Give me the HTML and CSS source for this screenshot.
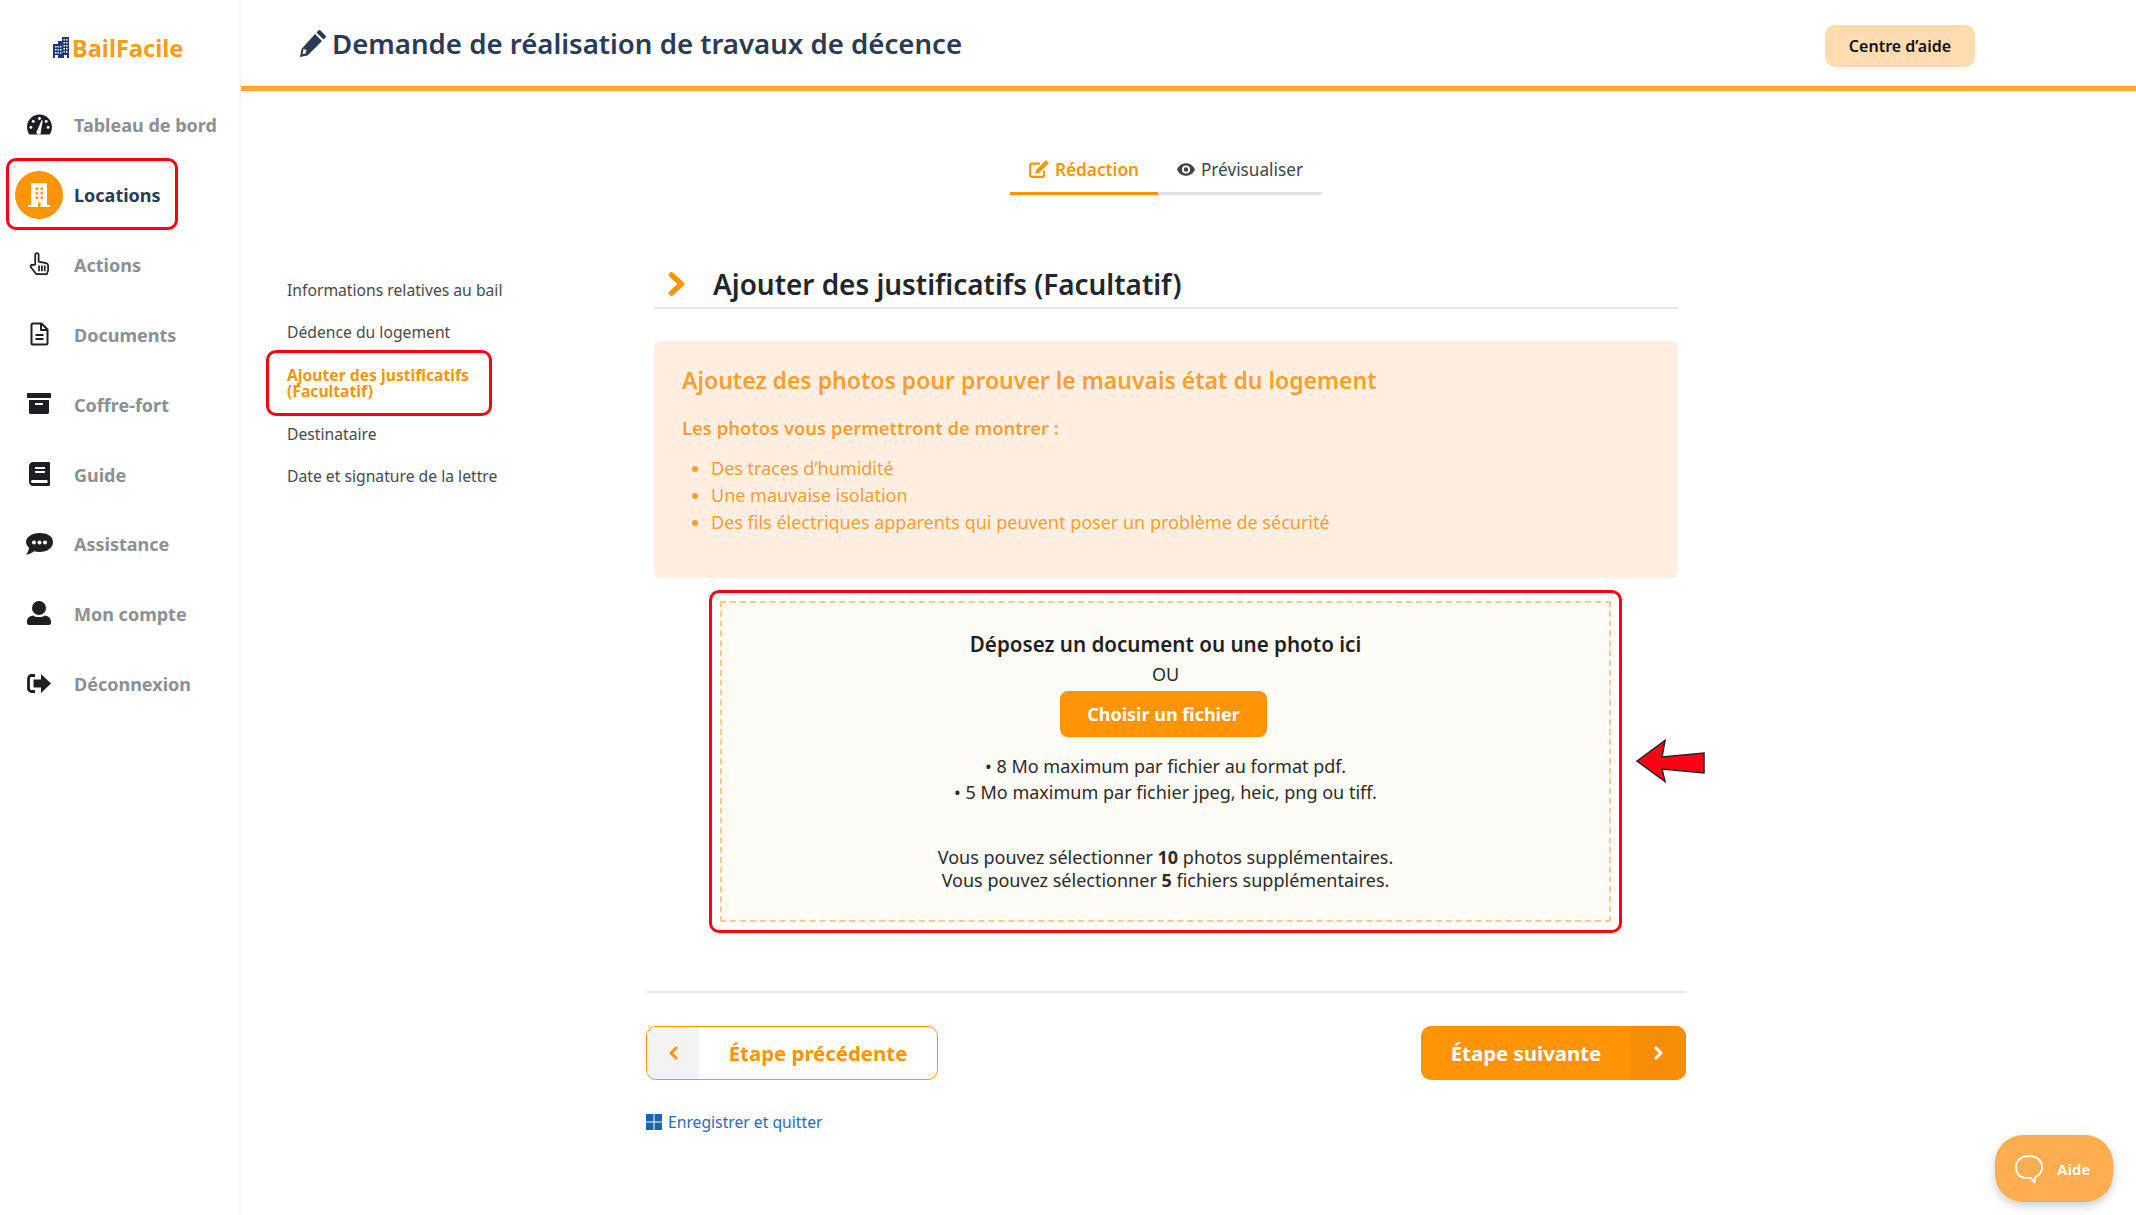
FILE: index.html
```html
<!DOCTYPE html>
<html lang="fr">
<head>
  <meta charset="UTF-8">
  <meta name="viewport" content="width=device-width, initial-scale=1.0">
  <title>BailFacile</title>
  <link rel="stylesheet" href="styles.css">
</head>
<body>
  <div id="wrapper">
    <aside id="sidebar">
      <div class="logo">
        <svg class="logo-icon" viewBox="0 0 16 21" width="16" height="21">
          <path fill="#1f3a78" d="M9 0h7v21H0V7h5V4h4z"/>
          <path fill="#fff" d="M10.5 2h1.5v1.5h-1.5zM13 2h1.5v1.5H13zM10.5 5h1.5v1.5h-1.5zM13 5h1.5v1.500H13zM10.500 8h1.500v1.500h-1.500zM13 8h1.500v1.500H13zM2 9h1.500v1.500H2zM4.500 9H6v1.500H4.500zM7 9h1.500v1.500H7zM2 12h1.500v1.500H2zM4.500 12H6v1.500H4.500zM7 12h1.500v1.500H7zM10.500 11h1.500v1.500h-1.500zM13 11h1.500v1.500H13zM2 15h1.500v1.500H2zM4.500 15H6v1.500H4.500zM7 15h1.500v1.500H7zM10.500 14h1.500v1.500h-1.500zM13 14h1.500v1.500H13zM2 18h3v3H2zM11 18h3v3h-3z"/>
        </svg>
        <span>BailFacile</span>
      </div>
      <nav class="nav">
        <a class="nav-item">
          <span class="nav-icon">
            <svg viewBox="0 0 28 24" width="27" height="23">
              <path fill="#1d1f22" d="M14 1.500C6.800 1.500 1 7.300 1 14.500c0 2.700.8 5.200 2.100 7.300.3.500.8.700 1.300.7h19.200c.5 0 1-.2 1.300-.7 1.300-2.100 2.100-4.600 2.100-7.300 0-7.200-5.800-13-13-13z"/>
              <g fill="#fff">
                <circle cx="5" cy="15" r="1.500"/><circle cx="7.500" cy="8.800" r="1.500"/><circle cx="14" cy="5.800" r="1.500"/><circle cx="21" cy="8.800" r="1.500"/><circle cx="23" cy="15" r="1.500"/>
                <path d="M16.200 7.500l1.200.4-2 11.200a2.400 2.400 0 1 1-3.800-.9z"/>
              </g>
            </svg>
          </span>
          <span>Tableau de bord</span>
        </a>
        <a class="nav-item active">
          <span class="nav-circle">
            <svg viewBox="0 0 22 24" width="22" height="24">
              <path fill="#fff" d="M3 0h16v22h3v2H0v-2h3z"/>
              <path fill="#ff9505" d="M7.500 4.500h2.500v2.500H7.500zM12.500 4.500H15v2.500h-2.500zM7.500 9h2.500v2.500H7.500zM12.500 9H15v2.500h-2.500zM7.500 13.500h2.500v2.500H7.500zM12.500 13.500H15v2.500h-2.500zM10 19.500h2.500v4.500H10z"/>
            </svg>
          </span>
          <span>Locations</span>
        </a>
        <a class="nav-item">
          <span class="nav-icon nudge-up">
            <svg viewBox="0 0 22 25" width="21" height="24" fill="none" stroke="#1d1f22" stroke-width="1.800" stroke-linejoin="round">
              <path d="M6.500 13V3a1.800 1.800 0 0 1 3.600 0v7l7.600 1.500c1.400.3 2.300 1.400 2.300 2.800v4.400c0 .6-.1 1.100-.3 1.600l-1 2.700H7.500L2 15.900c-1-1.300.6-3.300 2-2.300z"/>
              <path d="M10.500 14v6M13.500 14v6M16.500 14v6"/>
            </svg>
          </span>
          <span>Actions</span>
        </a>
        <a class="nav-item">
          <span class="nav-icon nudge-up">
            <svg viewBox="0 0 19 24" width="19" height="24" fill="none" stroke="#1d1f22" stroke-width="2" stroke-linejoin="round">
              <path d="M1.500 3c0-.8.700-1.500 1.500-1.500h8.500l6 6V21c0 .8-.7 1.500-1.500 1.500H3c-.8 0-1.500-.7-1.500-1.500z"/>
              <path d="M11 2v6h6M5.500 13h8M5.500 17h8"/>
            </svg>
          </span>
          <span>Documents</span>
        </a>
        <a class="nav-item">
          <span class="nav-icon nudge-up">
            <svg viewBox="0 0 24 21" width="24" height="21">
              <path fill="#1d1f22" d="M0 1c0-.6.400-1 1-1h22c.6 0 1 .4 1 1v4H0zM2 7h20v12.500c0 .8-.7 1.500-1.500 1.500h-17c-.8 0-1.500-.7-1.500-1.500zm6.500 3c-.4 0-.5.300-.5.500v1c0 .3.100.5.500.5h7c.4 0 .5-.2.500-.5v-1c0-.2-.1-.5-.5-.5z" fill-rule="evenodd"/>
            </svg>
          </span>
          <span>Coffre-fort</span>
        </a>
        <a class="nav-item">
          <span class="nav-icon nudge-up">
            <svg viewBox="0 0 21 24" width="21" height="24">
              <path fill="#1d1f22" d="M4 0h15.500c.8 0 1.500.7 1.500 1.500v21c0 .8-.7 1.500-1.500 1.500H4c-2.200 0-4-1.800-4-4V4c0-2.200 1.800-4 4-4z"/>
              <path fill="#fff" d="M6 5h10v2H6zM6 9h10v2H6zM3.500 18h15v3h-15c-.8 0-1.500-.7-1.500-1.500S2.700 18 3.500 18z"/>
            </svg>
          </span>
          <span>Guide</span>
        </a>
        <a class="nav-item">
          <span class="nav-icon">
            <svg viewBox="0 0 27 22" width="27" height="22">
              <path fill="#1d1f22" d="M13.500 0C6 0 0 4 0 9c0 2.200 1.200 4.200 3.100 5.700-.3 2.500-1.500 5-3.100 7 2.900-.2 6.100-1.800 8-3.500 1.700.5 3.600.8 5.500.8 7.500 0 13.500-4 13.500-10S21 0 13.500 0z"/>
              <circle fill="#fff" cx="8" cy="9.500" r="2"/><circle fill="#fff" cx="13.500" cy="9.500" r="2"/><circle fill="#fff" cx="19" cy="9.500" r="2"/>
            </svg>
          </span>
          <span>Assistance</span>
        </a>
        <a class="nav-item">
          <span class="nav-icon nudge-up">
            <svg viewBox="0 0 24 24" width="24" height="24">
              <circle fill="#1d1f22" cx="12" cy="7" r="7"/>
              <path fill="#1d1f22" d="M6 14.500c1.600 1 3.700 1.500 6 1.500s4.400-.5 6-1.500c3.500.5 6 3 6 6V22c0 1.100-.9 2-2 2H2c-1.100 0-2-.9-2-2v-1.500c0-3.500 2.500-5.500 6-6z"/>
            </svg>
          </span>
          <span>Mon compte</span>
        </a>
        <a class="nav-item">
          <span class="nav-icon nudge-up">
            <svg viewBox="0 0 24 19" width="24" height="19">
              <path fill="none" stroke="#1d1f22" stroke-width="2.800" d="M8 1.500H4.500a3 3 0 0 0-3 3v10a3 3 0 0 0 3 3H8"/>
              <path fill="#1d1f22" d="M14 0l10 9.500L14 19v-5.500H6.500v-8H14z"/>
            </svg>
          </span>
          <span>Déconnexion</span>
        </a>
      </nav>
    </aside>

    <div id="main">
      <header class="topbar">
        <h1 class="page-title">
          <svg viewBox="0 0 28 28" width="28" height="28">
            <path fill="#2b3a55" d="M21.500 1.500l5 5c.6.6.6 1.400 0 2l-2 2-7-7 2-2c.6-.6 1.400-.6 2 0zM16 5l7 7-14.500 14.500L1 28l1.500-8zM4.500 20l-1 5 1.500 0 1.500-.5 1-3.500z"/>
          </svg>
          Demande de réalisation de travaux de décence
        </h1>
        <a class="help-center">Centre d’aide</a>
      </header>

      <div class="content">
        <ul class="steps">
          <li>Informations relatives au bail</li>
          <li>Dédence du logement</li>
          <li class="current">Ajouter des justificatifs (Facultatif)</li>
          <li>Destinataire</li>
          <li>Date et signature de la lettre</li>
        </ul>

        <div class="form-col">
          <div class="tabs">
            <a class="tab active">
              <svg viewBox="0 0 20 18" width="20" height="18">
                <path fill="none" stroke="#ff9505" stroke-width="2.200" d="M15 10.500V15c0 1-.7 1.800-1.800 1.800H3c-1 0-1.800-.8-1.800-1.800V5.500c0-1 .8-1.800 1.800-1.800h8"/>
                <path fill="#ff9505" d="M17 0l3 3L10 13l-4 1 1-4z"/>
              </svg>
              Rédaction
            </a>
            <a class="tab">
              <svg viewBox="0 0 20 14" width="18" height="13">
                <path fill="#444" fill-rule="evenodd" d="M10 0c4.500 0 8.300 2.800 10 7-1.700 4.200-5.500 7-10 7S1.700 11.200 0 7c1.700-4.200 5.500-7 10-7zm0 2.500a4.500 4.500 0 1 0 0 9 4.500 4.500 0 0 0 0-9zm0 2a2.500 2.500 0 1 1 0 5 2.500 2.500 0 0 1 0-5z"/>
              </svg>
              Prévisualiser
            </a>
          </div>

          <div class="form-body">
            <h2 class="section-title">
              <svg viewBox="0 0 18 24" width="18" height="24">
                <path fill="none" stroke="#ff9505" stroke-width="5.500" stroke-linecap="round" stroke-linejoin="round" d="M3.500 3L13.500 12 3.500 21"/>
              </svg>
              Ajouter des justificatifs (Facultatif)
            </h2>

            <div class="callout">
              <h3>Ajoutez des photos pour prouver le mauvais état du logement</h3>
              <p>Les photos vous permettront de montrer :</p>
              <ul>
                <li>Des traces d’humidité</li>
                <li>Une mauvaise isolation</li>
                <li>Des fils électriques apparents qui peuvent poser un problème de sécurité</li>
              </ul>
            </div>

            <div class="dropzone-frame">
              <div class="dropzone">
                <div class="drop-title">Déposez un document ou une photo ici</div>
                <div class="drop-or">OU</div>
                <a class="choose-file">Choisir un fichier</a>
                <div class="drop-limits">
                  <div>• 8 Mo maximum par fichier au format pdf.</div>
                  <div>• 5 Mo maximum par fichier jpeg, heic, png ou tiff.</div>
                </div>
                <div class="drop-count">
                  <div>Vous pouvez sélectionner <b>10</b> photos supplémentaires.</div>
                  <div>Vous pouvez sélectionner <b>5</b> fichiers supplémentaires.</div>
                </div>
              </div>
              <svg class="red-arrow" viewBox="0 0 70 44" width="70" height="44">
                <path fill="#ff0015" stroke="#222" stroke-width="1.500" d="M1 22L29 1.500 26 18l42-4v20l-42-4 3 12.500z"/>
              </svg>
            </div>
          </div>

          <div class="form-footer">
            <a class="step-btn prev">
              <span class="step-btn-icon">
                <svg viewBox="0 0 10 14" width="10" height="14"><path fill="none" stroke="#ff9505" stroke-width="3" stroke-linecap="round" stroke-linejoin="round" d="M8 2L3 7l5 5"/></svg>
              </span>
              <span class="step-btn-label">Étape précédente</span>
            </a>
            <a class="step-btn next">
              <span class="step-btn-label">Étape suivante</span>
              <span class="step-btn-icon">
                <svg viewBox="0 0 10 14" width="10" height="14"><path fill="none" stroke="#fff" stroke-width="3" stroke-linecap="round" stroke-linejoin="round" d="M2 2l5 5-5 5"/></svg>
              </span>
            </a>
          </div>
          <a class="save-link">
            <svg viewBox="0 0 16 16" width="16" height="16">
              <path fill="#1a63ad" d="M0 0h7.500v7.500H0zM8.500 0H16v7.500H8.500zM0 8.500h7.500V16H0zM8.500 8.500H16V16H8.500z"/>
            </svg>
            Enregistrer et quitter
          </a>
        </div>
      </div>
    </div>
  </div>

  <a class="help-bubble">
    <svg viewBox="0 0 30 30" width="30" height="30" fill="none" stroke="#fff" stroke-width="1.800" stroke-linejoin="round">
      <path d="M15 2c7.500 0 13 4.500 13 11 0 5-3 8.500-6.500 10-.4.200-.6.500-.6 1l-.4 4.500-3.500-4.200c-.3-.3-.6-.5-1-.5H11C5.500 23.800 2 19 2 13 2 6.500 7.500 2 15 2z"/>
    </svg>
    <span>Aide</span>
  </a>
</body>
</html>
```

FILE: styles.css
```css
*, *::before, *::after { box-sizing: border-box; }
html, body {
  margin: 0;
  padding: 0;
  height: 100%;
  font-family: 'Noto Sans', sans-serif;
  background: white;
  overflow: hidden;
}
#wrapper {
  display: flex;
  height: 100%;
}
a { cursor: pointer; }

/* sidebar */
#sidebar {
  width: 241px;
  flex: none;
  border-right: 2px solid #f5f5f5;
}
.logo {
  height: 90px;
  display: flex;
  align-items: center;
  padding: 6px 0 0 53px;
  gap: 3px;
  color: #ff9a1a;
  font-size: 23.6px;
  font-weight: 700;
}
.logo-icon { margin-top: -1px; }
.nav-item {
  display: flex;
  align-items: center;
  height: 69.9px;
  padding-left: 15px;
  gap: 11px;
  font-size: 18px;
  font-weight: 700;
  color: #8b9094;
}
.nav-icon {
  width: 48px;
  display: flex;
  justify-content: center;
}
.nudge-up { margin-top: -2px; }
.nav-circle {
  width: 48px;
  height: 48px;
  border-radius: 50%;
  background: #ff9505;
  display: flex;
  align-items: center;
  justify-content: center;
}
.nav-item.active {
  width: 172px;
  height: 72px;
  margin: -2px 0 0 6px;
  padding: 2px 0 0 6px;
  border: 3px solid #ff0015;
  border-radius: 10px;
  color: #2b3a55;
}

/* top bar */
#main {
  flex: 1;
  min-width: 0;
}
.topbar {
  height: 91px;
  display: flex;
  align-items: center;
  justify-content: space-between;
  padding: 0 161px 0 58px;
  border-bottom: 5px solid #ffa733;
}
.page-title {
  display: flex;
  align-items: center;
  gap: 5px;
  margin: -1px 0 0;
  font-size: 27.6px;
  font-weight: 600;
  color: #2b3a55;
}
.help-center {
  width: 150px;
  height: 42px;
  margin-top: 5px;
  display: flex;
  align-items: center;
  justify-content: center;
  background: #ffdcb0;
  border-radius: 10px;
  font-size: 16px;
  font-weight: 600;
  color: #111;
}

/* steps */
.content {
  display: flex;
}
.steps {
  width: 405px;
  flex: none;
  list-style: none;
  margin: 178px 0 0;
  padding: 0 0 0 46px;
  font-size: 15.7px;
  line-height: 16px;
  color: #4a4a4a;
}
.steps li { padding: 13px 0; }
.steps li.current {
  width: 226px;
  margin: -3px 0 -3px -21px;
  padding: 14px 10px 14px 18px;
  border: 3px solid #ff0015;
  border-radius: 10px;
  font-weight: 700;
  color: #ff9505;
}

/* form column */
.form-col {
  width: 1040px;
  flex: none;
}
.tabs {
  display: flex;
  justify-content: center;
  margin-top: 57px;
}
.tab {
  display: flex;
  align-items: center;
  gap: 6px;
  height: 47px;
  padding: 0 19px 2px;
  border-bottom: 3px solid #e2e2e2;
  font-size: 17.2px;
  color: #3d4650;
}
.tab.active {
  border-bottom-color: #ff9505;
  color: #ff9505;
  font-weight: 600;
}
.form-body {
  padding: 0 8px;
}
.section-title {
  display: flex;
  align-items: center;
  gap: 27px;
  height: 49px;
  margin: 65px 0 0;
  padding-left: 14px;
  border-bottom: 2px solid #e6e6e6;
  font-size: 27.9px;
  font-weight: 600;
  color: #22262b;
}
.callout {
  height: 237px;
  margin-top: 32px;
  padding: 22px 28px;
  background: #feefe2;
  border-radius: 6px;
  color: #ff9f2e;
}
.callout h3 {
  margin: 0;
  font-size: 23px;
  line-height: 34px;
  font-weight: 600;
}
.callout p {
  margin: 18px 0 0;
  font-size: 18.4px;
  line-height: 26px;
  font-weight: 600;
}
.callout ul {
  margin: 14px 0 0;
  padding-left: 29px;
  font-size: 18px;
  line-height: 27px;
}

/* drop zone */
.dropzone-frame {
  position: relative;
  width: 913px;
  margin: 12px 0 0 55px;
  padding: 8px;
  border: 3px solid #ff0015;
  border-radius: 10px;
}
.red-arrow {
  position: absolute;
  left: calc(100% + 17px);
  top: 146px;
}
.dropzone {
  height: 321px;
  padding-top: 26px;
  border: 2px dashed #ffcb8a;
  background: #fffbf6;
  text-align: center;
  font-size: 18px;
  color: #2b2b2b;
}
.drop-title {
  font-size: 20.6px;
  line-height: 30px;
  font-weight: 600;
  color: #1f1f1f;
}
.drop-or {
  margin-top: 3px;
  line-height: 24px;
}
.choose-file {
  display: block;
  width: 207px;
  height: 46px;
  margin: 5px auto 0;
  position: relative;
  left: -2px;
  line-height: 46px;
  background: #ff9505;
  border-radius: 8px;
  color: white;
  font-weight: 700;
}
.drop-limits {
  margin-top: 16px;
  line-height: 26px;
}
.drop-count {
  margin-top: 41px;
  line-height: 23px;
}

/* bottom buttons */
.form-footer {
  display: flex;
  justify-content: space-between;
  margin-top: 58px;
  padding-top: 33px;
  border-top: 2px solid #e6e6e6;
}
.step-btn {
  display: flex;
  height: 54px;
  border-radius: 10px;
  overflow: hidden;
  font-size: 20.4px;
  font-weight: 700;
}
.step-btn-icon {
  width: 52px;
  display: flex;
  align-items: center;
  justify-content: center;
}
.step-btn-label {
  flex: 1;
  display: flex;
  align-items: center;
  justify-content: center;
}
.prev {
  width: 292px;
  border: 1.5px solid #ff9505;
  color: #ff9505;
}
.prev .step-btn-icon { background: #f3f3f3; }
.next {
  width: 265px;
  background: #ff9505;
  color: white;
}
.next .step-btn-icon {
  width: 55px;
  background: #f58d05;
}
.save-link {
  display: flex;
  align-items: center;
  gap: 6px;
  margin-top: 31px;
  font-size: 15.7px;
  color: #2f6bb5;
}

/* help bubble */
.help-bubble {
  position: fixed;
  right: 23px;
  bottom: 13px;
  width: 118px;
  height: 67px;
  display: flex;
  align-items: center;
  gap: 13px;
  padding-left: 19px;
  background: #ffae4f;
  border-radius: 28px;
  box-shadow: 0 4px 10px rgba(0, 0, 0, 0.2);
  color: white;
  font-size: 15px;
  font-weight: 700;
}
```
